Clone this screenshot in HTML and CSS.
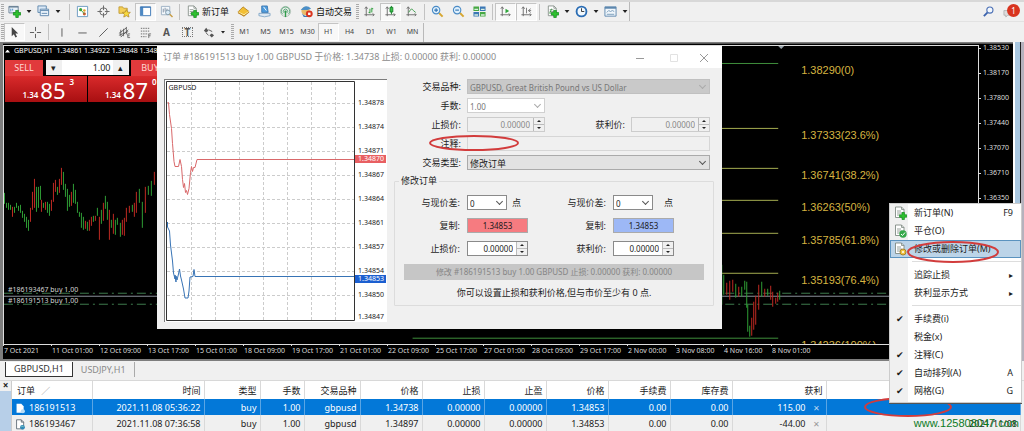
FILE: index.html
```html
<!DOCTYPE html>
<html lang="zh-CN">
<head>
<meta charset="utf-8">
<title>GBPUSD,H1</title>
<link rel="stylesheet" href="styles.css">
</head>
<body>
<svg class="defs" aria-hidden="true">
  <defs>
    <symbol id="plus" viewBox="0 0 8 8"><path d="M3 0.5h2.4v2.3h2.3v2.4H5.4v2.3H3V5.2H.6V2.8H3z" fill="#2fc12f" stroke="#0f8a1c" stroke-width=".7"/></symbol>
    <symbol id="sheet" viewBox="0 0 14 14"><path d="M2.5 1h6l2.500 2.500v8h-8.500z" fill="#fff" stroke="#7f8a83" stroke-width=".9"/><path d="M8.500 1v2.500H11M4 5h4M4 7h5M4 9h3" fill="none" stroke="#7f8a83" stroke-width=".8"/></symbol>
    <symbol id="axes" viewBox="0 0 14 14"><path d="M3.500 2v10M1.500 10.500H12M2 4l1.500-2L5 4M10.500 9l1.500 1.500-1.500 1.500" fill="none" stroke="#6c6c6c"/></symbol>
    <symbol id="deal" viewBox="0 0 14 14"><path d="M2 1h6l3 3v8.500H2z" fill="#fff" stroke="#4d5a66"/><path d="M8 1v3h3" fill="none" stroke="#4d5a66"/><circle cx="9.500" cy="10.500" r="3" fill="#2c86b8"/><path d="M8 10q1-1.500 3 0" stroke="#9be0c0" fill="none"/></symbol>
  </defs>
</svg>

<header class="toolbars">
  <div class="bar bar-main">
    <i class="grip"></i>
    <button class="tool" aria-label="新图表"><svg viewBox="0 0 14 14"><path d="M1 1.500h10v7H1z" fill="#e9f1f8" stroke="#6b8296"/><path d="M1 2h10" stroke="#6b8296" stroke-width="1.500"/><path d="M3 7V4M5 6V4" stroke="#4b8ec2"/><use href="#plus" x="5" y="5" width="9" height="9"/></svg></button><i class="drop"></i>
    <button class="tool" aria-label="配置文件"><svg viewBox="0 0 14 14"><path d="M1 1h9v7H1z" fill="#dbe9f6" stroke="#5e87ad"/><path d="M3.500 4.500h9v7h-9z" fill="#edf5fc" stroke="#5e87ad"/><path d="M3.500 6h9M5 9h6" stroke="#5e87ad"/></svg></button><i class="drop"></i>
    <i class="sep"></i>
    <button class="tool" aria-label="市场报价"><svg viewBox="0 0 14 14"><path d="M1.500 1.500h11v11h-11z" fill="#fff" stroke="#6a9ac0"/><circle cx="5" cy="5" r="1.700" fill="#3aa33a"/><circle cx="9" cy="6" r="1.400" fill="#e0a32e"/><circle cx="9" cy="9.500" r="1.700" fill="#d05a30"/><path d="M5 5l4 4.500" stroke="#3aa33a"/></svg></button>
    <button class="tool" aria-label="数据窗口"><svg viewBox="0 0 14 14"><circle cx="7" cy="7" r="4" fill="none" stroke="#666"/><path d="M7 .500v5M7 8.500v5M.500 7h5M8.500 7h5" stroke="#666"/></svg></button>
    <button class="tool" aria-label="导航"><svg viewBox="0 0 14 14"><path d="M1 2h4l1 1.500h4V9H1z" fill="#f4cf57" stroke="#b8902a" stroke-width=".8"/><path d="M9 5l1.300 2.700 3 .300-2.200 2 .700 3L9 11.500 6.200 13l.700-3-2.200-2 3-.300z" fill="#f7da3d" stroke="#b1872a" stroke-width=".8"/></svg></button>
    <button class="tool pressed" aria-label="终端"><svg viewBox="0 0 14 14"><path d="M1.500 2h11v9.500h-11z" fill="#fff" stroke="#3d78b5"/><path d="M2 2h2.500v9H2z" fill="#4b88c4"/><path d="M1.500 2.500h11" stroke="#3d78b5"/></svg></button>
    <button class="tool" aria-label="策略测试"><svg viewBox="0 0 14 14"><path d="M1.500 1.500h9v9h-9z" fill="#f5f9fc" stroke="#9db0c2"/><path d="M3.500 8V4M5.500 7V3M7.500 8V4" stroke="#7d8ea0"/><circle cx="8.500" cy="8" r="2.500" fill="#d9ebf7" stroke="#7d96a8"/><path d="M10.500 10l3 3" stroke="#c69b42" stroke-width="1.600"/></svg></button>
    <i class="sep"></i>
    <button class="tool wide"><svg viewBox="0 0 14 14"><use href="#sheet" width="14" height="14"/><use href="#plus" x="5" y="5" width="9" height="9"/></svg>新订单</button>
    <button class="tool" aria-label="编辑器"><svg viewBox="0 0 14 14"><path d="M1 7.500L6.500 2l6.500 5-5.500 5z" fill="#f2bf35" stroke="#a9781c" stroke-width=".8"/><path d="M1 7.500l6.500 3 5.500-3.500" fill="none" stroke="#fff0b0"/><path d="M1 7.500v1.500L7.500 12.500 13 8V7l-5.500 4.500z" fill="#bd8521"/></svg></button>
    <button class="tool" aria-label="市场"><svg viewBox="0 0 14 14"><path d="M4 1h6l1 7H4z" fill="#4f9cdd" stroke="#2b6aa8" stroke-width=".8"/><path d="M6 2l3 4" stroke="#fff"/><path d="M1 9h12v2.500q-6 2.500-12 0z" fill="#dfe9f2" stroke="#6d9ac0" stroke-width=".8"/></svg></button>
    <button class="tool" aria-label="信号"><svg viewBox="0 0 14 14"><circle cx="7" cy="7" r="5.500" fill="#e6ece8" stroke="#b3c2ba"/><path d="M4 10a4.500 4.500 0 1 1 6 0M5.500 8.500a2.300 2.300 0 1 1 3 0" fill="none" stroke="#5ba878"/><circle cx="7" cy="7" r="1.200" fill="#2f9a4a"/><path d="M7 7v6" stroke="#2f9a4a" stroke-width="1.500"/></svg></button>
    <button class="tool wide"><svg viewBox="0 0 14 14"><circle cx="6" cy="6.500" r="4.500" fill="#e8bc6a"/><path d="M.800 5.500Q6-2 12 4L8 5.500z" fill="#4b8fc8"/><path d="M2 9q4 5 8 1v3H4z" fill="#3b78b2"/><circle cx="10" cy="9.500" r="3.700" fill="#d9361f"/><path d="M8.700 8.200h2.600v2.600H8.700z" fill="#fff"/></svg>自动交易</button>
    <i class="grip"></i>
    <button class="tool" aria-label="柱状图"><svg viewBox="0 0 14 14"><use href="#axes"/><path d="M7.500 4v5M9.500 3v5M6 8h1.500M9.500 4H11" stroke="#279b35" fill="none"/></svg></button>
    <button class="tool pressed" aria-label="蜡烛图"><svg viewBox="0 0 14 14"><use href="#axes"/><path d="M8 1v9" stroke="#16822a"/><path d="M6.500 2.500h3v5h-3z" fill="#3cc04a" stroke="#16822a"/></svg></button>
    <button class="tool" aria-label="折线图"><svg viewBox="0 0 14 14"><use href="#axes"/><path d="M4 8q3-6 5-2l2.500 2" stroke="#3c9a4a" fill="none"/></svg></button>
    <i class="sep"></i>
    <button class="tool" aria-label="放大"><svg viewBox="0 0 14 14"><path d="M8.500 8.500l4 4" stroke="#d6a630" stroke-width="2.200"/><circle cx="5.500" cy="5.500" r="4" fill="#dff0fc" stroke="#4a8bc6" stroke-width="1.200"/><path d="M3.500 5.500h4M5.500 3.500v4" stroke="#2f73b4" stroke-width="1.200"/></svg></button>
    <button class="tool" aria-label="缩小"><svg viewBox="0 0 14 14"><path d="M8.500 8.500l4 4" stroke="#d6a630" stroke-width="2.200"/><circle cx="5.500" cy="5.500" r="4" fill="#dff0fc" stroke="#4a8bc6" stroke-width="1.200"/><path d="M3.500 5.500h4" stroke="#2f73b4" stroke-width="1.200"/></svg></button>
    <button class="tool" aria-label="平铺窗口"><svg viewBox="0 0 14 14"><path d="M.500 1.500h6v5h-6zM7.500 7.500h6v5h-6z" fill="#47a843"/><path d="M7.500 1.500h6v5h-6zM.500 7.500h6v5h-6z" fill="#3a77b5"/><path d="M1.500 4h4v1.500h-4zM8.500 4h4v1.500h-4zM1.500 10h4v1.500h-4zM8.500 10h4v1.500h-4z" fill="#d9efe0"/></svg></button>
    <i class="sep"></i>
    <button class="tool pressed" aria-label="自动滚动"><svg viewBox="0 0 14 14"><use href="#axes"/><path d="M7 4l4 2.500L7 9z" fill="#2ea53b"/></svg></button>
    <button class="tool pressed" aria-label="图表平移"><svg viewBox="0 0 14 14"><use href="#axes"/><path d="M7 3v6M11.500 4L9 6l2.500 2M9 6h3" fill="none" stroke="#777"/></svg></button>
    <i class="sep"></i>
    <button class="tool" aria-label="指标"><svg viewBox="0 0 14 14"><use href="#sheet" width="14" height="14"/><path d="M4 9l2-5" stroke="#2a9a35"/><use href="#plus" x="5" y="5" width="9" height="9"/></svg></button><i class="drop"></i>
    <button class="tool" aria-label="周期"><svg viewBox="0 0 14 14"><circle cx="7" cy="7" r="5.300" fill="#f2f8fd" stroke="#2b6db4" stroke-width="2"/><path d="M7 3.500V7h3" fill="none" stroke="#333"/></svg></button><i class="drop"></i>
    <button class="tool" aria-label="模板"><svg viewBox="0 0 14 14"><path d="M1 2h12v10H1z" fill="#f1f7fc" stroke="#5d87ae"/><path d="M1 3h12" stroke="#5d87ae" stroke-width="2"/><path d="M3 8l2-2 2 1 2-1 2 1M3 10h8" fill="none" stroke="#7699b8"/></svg></button><i class="drop"></i>
    <i class="edge"></i>
    <div class="bar-end">
      <button class="tool" aria-label="搜索"><svg viewBox="0 0 14 14"><path d="M6 8l-4 4" stroke="#3a62ad" stroke-width="2"/><circle cx="8.500" cy="5.500" r="3.300" fill="#f3f8fd" stroke="#4a6fb5" stroke-width="1.200"/></svg></button>
      <button class="tool alert" aria-label="消息"><svg viewBox="0 0 14 14"><path d="M1 6h7v5H5l-2 2v-2H1z" fill="#ddd" stroke="#aaa" stroke-width=".8"/></svg><span class="badge">1</span></button>
    </div>
  </div>
  <div class="bar bar-draw">
    <i class="grip"></i>
    <button class="tool pressed" aria-label="光标"><svg viewBox="0 0 14 14"><path d="M4 1v10l2.300-2.200L8 12.500l1.700-.800L8 8.200h3z" fill="#444"/></svg></button>
    <button class="tool" aria-label="十字准线"><svg viewBox="0 0 14 14"><path d="M7 1v4.500M7 8.500V13M1 7h4.500M8.500 7H13" stroke="#555"/></svg></button>
    <i class="sep"></i>
    <button class="tool" aria-label="垂直线"><svg viewBox="0 0 14 14"><path d="M7.500 2.500v9" stroke="#555"/></svg></button>
    <button class="tool" aria-label="水平线"><svg viewBox="0 0 14 14"><path d="M2.500 7.500h9" stroke="#555"/></svg></button>
    <button class="tool" aria-label="趋势线"><svg viewBox="0 0 14 14"><path d="M2.500 11.500l9-9" stroke="#555"/></svg></button>
    <button class="tool" aria-label="通道"><svg viewBox="0 0 14 14"><path d="M1 8l8-6M3 12l8-8M3 4v7M6 3v8M9 1v8M1 10l10-4" stroke="#555" stroke-width=".9"/><path d="M13 8.500h-2.500v4H13M10.500 10.500h2" fill="none" stroke="#555" stroke-width=".8"/></svg></button>
    <button class="tool" aria-label="斐波那契"><svg viewBox="0 0 14 14"><path d="M2 2.500h10M2 5.500h10M2 8.500h8M2 11.500h6" stroke="#666" stroke-dasharray="1.500 1"/><path d="M10.500 13V8.500H13M10.500 10.500h2" fill="none" stroke="#555" stroke-width=".8"/></svg></button>
    <button class="tool letter">A</button>
    <button class="tool letter boxed"><span>T</span></button>
    <button class="tool" aria-label="箭头"><svg viewBox="0 0 14 14"><path d="M2 5l2.500-3L7 5 4.500 7zM8 10l2.500-2L13 10l-2.500 2.500z" fill="#555"/><path d="M4 7l3 3M7 4l4 2" stroke="#555"/></svg></button><i class="drop"></i>
    <i class="grip"></i>
    <button class="tool">M1</button><button class="tool">M5</button><button class="tool">M15</button><button class="tool">M30</button><button class="tool pressed">H1</button><button class="tool">H4</button><button class="tool">D1</button><button class="tool">W1</button><button class="tool">MN</button>
    <i class="edge"></i>
  </div>
</header>

<main class="workspace">
  <section class="chart">
    <div class="plot">
      <svg class="candles" viewBox="5 46 975 300" preserveAspectRatio="xMinYMin slice">
        <path class="tri" d="M779 45h8l-4 4z"/>
        <path class="level-a" d="M722 63.500h58M414 338.500h366"/>
        <path class="level-b" d="M722 128.500h58M722 168.500h58M722 200.500h58M722 233.500h58M722 273.500h58"/>
        <path class="order" d="M5 293.500h975M5 304.500h975"/>
        <path class="bid" d="M5 296.500h975"/>
        <path class="up" d="M5.500 193V204M7.500 203V208M9.500 203V210M11.500 205V210M15.500 207V213M17.500 203V208M19.500 206V211M21.500 205V213M23.500 211V218M25.500 214V222M27.500 217V228M29.500 220V231M37.500 187V212M39.500 187V208M41.500 186V200M44.500 203V208M48.500 202V213M50.500 204V216M58.500 187V195M64.500 172V190M66.500 184V197M68.500 189V211M70.500 195V207M74.500 184V203M76.500 190V204M78.500 202V213M80.500 212V217M82.500 213V228M84.500 217V230M88.500 222V231M94.500 216V222M98.500 208V216M102.500 210V224M106.500 196V209M108.500 202V220M112.500 220V228M116.500 220V235M118.500 218V225M121.500 223V237M133.500 205V212M140.500 189V203M143.500 202V228M149.500 186V195M152.500 181V196M723.500 265V305M725.500 275V295M737.500 284V298M743.500 287V297M746.500 281V290M748.500 282V308M749.500 305V332M751.500 326V337M763.500 282V297M769.500 289V296M781.500 291V300"/>
        <path class="down" d="M13.500 207V217M31.500 208V222M33.500 192V210M35.500 179V208M42.500 200V212M46.500 202V210M52.500 200V211M54.500 183V202M56.500 180V192M60.500 179V193M62.500 168V185M72.500 192V206M86.500 221V229M90.500 220V231M92.500 217V226M96.500 216V221M100.500 217V240M104.500 203V221M110.500 210V240M114.500 214V234M123.500 220V235M125.500 218V236M127.500 208V222M130.500 206V213M135.500 203V217M137.500 192V213M146.500 187V213M155.500 172V185M728.500 283V295M731.500 281V300M734.500 280V292M740.500 287V297M753.500 318V336M755.500 302V330M757.500 296V325M760.500 285V310M766.500 289V297M772.500 286V300M774.500 292V307M777.500 298V304M779.500 293V302"/>
        <g class="fib">
          <text x="803" y="74">1.38290(0)</text>
          <text x="803" y="139">1.37333(23.6%)</text>
          <text x="803" y="179">1.36741(38.2%)</text>
          <text x="803" y="211">1.36263(50%)</text>
          <text x="803" y="244">1.35785(61.8%)</text>
          <text x="803" y="284">1.35193(76.4%)</text>
          <text x="803" y="349">1.34236(100%)</text>
        </g>
        <g class="note">
          <text x="9" y="292">#186193467 buy 1.00</text>
          <text x="9" y="303">#186191513 buy 1.00</text>
        </g>
      </svg>
      <div class="quick">
        <p class="symbol"><span class="tri-up"></span>GBPUSD,H1&nbsp; 1.34861 1.34922 1.34848 1.34853</p>
        <div class="trade">
          <button class="side">SELL</button>
          <div class="lots"><button aria-label="减少">▾</button><input value="1.00" aria-label="手数"><button aria-label="增加">▴</button></div>
          <button class="side">BUY</button>
        </div>
        <div class="quotes">
          <div class="quote">1.34<b>85</b><sup>3</sup></div>
          <div class="quote">1.34<b>87</b><sup>0</sup></div>
        </div>
      </div>
    </div>
    <div class="prices"><span>1.38530</span><span>1.38170</span><span>1.37800</span><span>1.37440</span><span>1.37070</span><span>1.36710</span><span>1.36350</span></div>
    <div class="times"><span>7 Oct 2021</span><span>11 Oct 01:00</span><span>12 Oct 09:00</span><span>13 Oct 17:00</span><span>15 Oct 01:00</span><span>18 Oct 09:00</span><span>19 Oct 17:00</span><span>21 Oct 01:00</span><span>22 Oct 09:00</span><span>25 Oct 17:00</span><span>27 Oct 01:00</span><span>28 Oct 09:00</span><span>29 Oct 17:00</span><span>2 Nov 00:00</span><span>3 Nov 08:00</span><span>4 Nov 16:00</span><span>8 Nov 01:00</span></div>
  </section>

  <section class="dialog" role="dialog" aria-labelledby="dlg-title">
    <header class="titlebar">
      <h1 id="dlg-title">订单 #186191513 buy 1.00 GBPUSD 于价格: 1.34738 止损: 0.00000 获利: 0.00000</h1>
      <button aria-label="最小化"><svg viewBox="0 0 10 10"><path d="M1 5.500h8" stroke="#999"/></svg></button>
      <button aria-label="最大化"><svg viewBox="0 0 10 10"><path d="M1.500 1.500h7v7h-7z" fill="none" stroke="#e2e2e2"/></svg></button>
      <button aria-label="关闭"><svg viewBox="0 0 10 10"><path d="M1 1l8 8M9 1l-8 8" stroke="#999"/></svg></button>
    </header>
    <div class="dialog-body">
      <div class="ticks">
        <svg class="tick-plot" viewBox="166 81 189 240" preserveAspectRatio="none">
          <path class="tick-grid" d="M191.500 82v238M215.500 82v238M239.500 82v238M263.500 82v238M287.500 82v238M311.500 82v238M335.500 82v238M167 103.500h187M167 127.500h187M167 151.500h187M167 175.500h187M167 199.500h187M167 223.500h187M167 247.500h187M167 271.500h187M167 295.500h187"/>
          <path class="ask" d="M167.500 102.500h1l1 12 2 14 1 15 1.500 18 1 5h3.500l1.500-7 1.500 7 1 13 1 8 1-4 1 9 1-2 1 4 1.500-6 1.500-16 1-6 1 5 1-4 1.500 0 2-8H354"/>
          <path class="buy" d="M167.500 222v5l2 4 1 14 2 16 1 12 1.500 6v-4l1 7v-6l1 4 1.500-6 1-5 1 7 1 4 2 9 1.500 9h3l1-7 1-14 3-.500 1-7 1 7H354"/>
          <path class="frame" d="M166.500 81.500h188v239h-188z"/>
          <text x="168.500" y="90">GBPUSD</text>
        </svg>
        <ul class="scale"><li>1.34878</li><li>1.34874</li><li>1.34871<em class="mark-ask">1.34870</em></li><li>1.34867</li><li>1.34864</li><li>1.34861</li><li>1.34857</li><li>1.34854<em class="mark-bid">1.34853</em></li><li>1.34850</li><li>1.34847</li></ul>
      </div>
      <form class="order-form">
        <div class="fields">
          <label for="sym">交易品种:</label>
          <span class="pick full off"><select id="sym" disabled><option>GBPUSD, Great British Pound vs US Dollar</option></select></span>
          <label for="vol">手数:</label>
          <span class="pick faint"><select id="vol" disabled><option>1.00</option></select></span>
          <label class="col1" for="sl0">止损价:</label>
          <span class="spin faded"><input id="sl0" value="0.00000" disabled><i></i></span>
          <label for="tp0">获利价:</label>
          <span class="spin faded"><input id="tp0" value="0.00000" disabled><i></i></span>
          <label for="cmt">注释:</label>
          <span class="full comment"><input id="cmt" disabled><svg class="ring" viewBox="0 0 92 18"><ellipse cx="46" cy="9" rx="44" ry="7"/></svg></span>
          <label for="kind">交易类型:</label>
          <span class="pick full type"><select id="kind"><option>修改订单</option></select></span>
        </div>
        <fieldset>
          <legend>修改订单</legend>
          <div class="modify">
            <label for="d1">与现价差:</label><div class="pair"><span class="pick"><select id="d1"><option>0</option></select></span>点</div>
            <label for="d2">与现价差:</label><div class="pair far"><span class="pick"><select id="d2"><option>0</option></select></span>点</div>
            <label for="c1">复制:</label><button type="button" id="c1" class="copy red">1.34853</button>
            <label for="c2">复制:</label><button type="button" id="c2" class="copy blue">1.34853</button>
            <label for="sl">止损价:</label><span class="spin"><input id="sl" value="0.00000"><i></i></span>
            <label for="tp">获利价:</label><span class="spin"><input id="tp" value="0.00000"><i></i></span>
          </div>
          <button type="button" class="submit" disabled>修改 #186191513 buy 1.00 GBPUSD 止损: 0.00000 获利: 0.00000</button>
          <p class="hint">你可以设置止损和获利价格,但与市价至少有 0 点.</p>
        </fieldset>
      </form>
    </div>
  </section>
</main>

<nav class="tabs"><button class="active">GBPUSD,H1</button><button>USDJPY,H1</button></nav>

<section class="terminal">
  <div class="rail"><button aria-label="关闭">×</button></div>
  <table>
    <colgroup><col class="w80"><col class="w112"><col class="w56"><col class="w44"><col class="w56"><col class="w62"><col class="w62"><col class="w62"><col class="w62"><col class="w62"><col class="w62"><col class="w94"><col></colgroup>
    <thead><tr><th>订单 <span class="sort">∕</span></th><th>时间</th><th>类型</th><th>手数</th><th>交易品种</th><th>价格</th><th>止损</th><th>止盈</th><th>价格</th><th>手续费</th><th>库存费</th><th>获利</th><th></th></tr></thead>
    <tbody>
      <tr class="selected"><td><svg class="doc" viewBox="0 0 14 14"><path d="M2 1h6l3 3v8.500H2z" fill="#fff"/><circle cx="10" cy="10.500" r="2.700" fill="#b9dcf5"/></svg>186191513</td><td>2021.11.08 05:36:22</td><td>buy</td><td>1.00</td><td>gbpusd</td><td>1.34738</td><td>0.00000</td><td>0.00000</td><td>1.34853</td><td>0.00</td><td>0.00</td><td>115.00<button class="x" aria-label="平仓">✕</button></td><td></td></tr>
      <tr><td><svg class="doc" viewBox="0 0 14 14"><use href="#deal"/></svg>186193467</td><td>2021.11.08 07:36:58</td><td>buy</td><td>1.00</td><td>gbpusd</td><td>1.34897</td><td>0.00000</td><td>0.00000</td><td>1.34853</td><td>0.00</td><td>0.00</td><td>-44.00<button class="x" aria-label="平仓">✕</button></td><td>2021/11/08</td></tr>
    </tbody>
  </table>
  <svg class="ring ring-row" viewBox="0 0 90 22"><ellipse cx="45" cy="11" rx="43" ry="9"/></svg>
  <a class="mark" href="#">www.125808047.com</a>
</section>

<div class="menu" role="menu">
  <button role="menuitem"><svg viewBox="0 0 14 14"><use href="#sheet"/><use href="#plus" x="6" y="6" width="8" height="8"/></svg>新订单(N)<kbd>F9</kbd></button>
  <button role="menuitem"><svg viewBox="0 0 14 14"><use href="#sheet"/><circle cx="10" cy="10" r="3.700" fill="#35a84a"/><path d="M8 10l1.500 1.500L12 8.500" fill="none" stroke="#fff"/></svg>平仓(O)</button>
  <button role="menuitem" class="hot"><svg viewBox="0 0 14 14"><use href="#sheet"/><circle cx="10" cy="10" r="3" fill="#f0c23e" stroke="#a9842d"/><circle cx="10" cy="10" r="1" fill="#fff"/></svg>修改或删除订单(M)</button>
  <hr>
  <button role="menuitem"><span class="tick"></span>追踪止损<kbd class="sub">▸</kbd></button>
  <button role="menuitem"><span class="tick"></span>获利显示方式<kbd class="sub">▸</kbd></button>
  <hr>
  <button role="menuitem"><span class="tick">✔</span>手续费(i)</button>
  <button role="menuitem"><span class="tick"></span>税金(x)</button>
  <button role="menuitem"><span class="tick">✔</span>注释(C)</button>
  <button role="menuitem"><span class="tick">✔</span>自动排列(A)<kbd>A</kbd></button>
  <button role="menuitem"><span class="tick">✔</span>网格(G)<kbd>G</kbd></button>
  <svg class="ring ring-menu" viewBox="0 0 94 24"><ellipse cx="47" cy="12" rx="45" ry="10"/></svg>
</div>
</body>
</html>
```
FILE: styles.css
```css
* { box-sizing: border-box; }
body {
  position: relative;
  display: flex;
  flex-direction: column;
  min-height: 100vh;
  margin: 0;
  overflow: hidden;
  background: #f0f0f0;
  color: #1c1c1c;
  font: 9px/12px "Noto Sans", "Noto Sans CJK SC", sans-serif;
}
button, input, select {
  margin: 0;
  padding: 0;
  border: 0;
  border-radius: 0;
  background: none;
  color: inherit;
  font: inherit;
}
p, h1, ul { margin: 0; padding: 0; font: inherit; list-style: none; }
.defs { position: absolute; width: 0; height: 0; }

/* toolbars */
.toolbars { border-top: 2px solid #d8d8d8; }
.bar { display: flex; align-items: center; height: 20px; padding-left: 1px; }
.grip { width: 3px; height: 16px; background: repeating-linear-gradient(#aaa 0 1px, #f0f0f0 1px 2px); }
.bar-main { border-bottom: 1px solid #e2e2e2; }
.tool {
  position: relative;
  display: flex;
  flex: none;
  align-items: center;
  justify-content: center;
  width: 21px;
  height: 18px;
  color: #444;
  font-size: 7px;
}
.tool svg { width: 13px; height: 13px; }
.tool.wide { width: auto; gap: 3px; padding: 0 4px; color: #111; font-size: 9px; white-space: nowrap; }
.pressed { border: 1px solid #c4c4c4; border-right-color: #fff; border-bottom-color: #fff; background: #f8f8f8; }
.drop { width: 8px; height: 3px; background: #222; clip-path: polygon(20% 0, 80% 0, 50% 100%); }
.sep { width: 1px; height: 16px; margin: 0 2px; background: #c2c2c2; }
.bar-main .drop + .sep { margin-left: 7px; }
.drop + .grip { margin-left: 4px; }
.bar .edge { width: 1px; height: 19px; background: #b9b9b9; }
.letter { color: #555; font-size: 10px; font-weight: bold; }
.boxed span { padding: 0 2px; border: 1px dotted #777; line-height: 8px; }
.bar-end { display: flex; margin-left: auto; padding-right: 4px; }
.badge {
  position: absolute;
  top: 1px;
  right: 0;
  width: 13px;
  height: 13px;
  border-radius: 50%;
  background: #d8341f;
  color: #fff;
  font-size: 8px;
  line-height: 13px;
  text-align: center;
}

/* chart */
.workspace { position: relative; flex: 1; display: flex; }
.chart {
  flex: 1;
  display: grid;
  grid-template: 1fr 14px / minmax(0, 1fr) 34px;
  padding-left: 1px;
  border: solid #7d7d7d;
  border-width: 1px 0 2px 3px;
  background: #000;
  box-shadow: inset 0 1px #555;
}
.workspace::after {
  content: "";
  width: 11px;
  background: linear-gradient(90deg, #fff 0 2px, #a9c7e0 2px 7px, #222 7px 8px, #b5b2bd 8px);
}
.plot { position: relative; margin-top: 2px; border: solid #ddd; border-width: 1px 1px 1px 0; box-shadow: -1px 0 #ddd; overflow: hidden; }
.candles { position: absolute; width: 100%; height: 100%; }
.candles path { fill: none; stroke-width: 1; }
.candles .tri { fill: #9aa5ad; }
.candles .level-a { stroke: #3f8f3c; }
.candles .level-b { stroke: #a5ad50; }
.candles .order { stroke: #3d7a4c; stroke-dasharray: 9 4 2 4; }
.candles .bid { stroke: #8a9099; }
.candles .up { stroke: #2f9e35; }
.candles .down { stroke: #c02a22; }
.fib { fill: #d6b440; font: 11px "Liberation Sans", sans-serif; }
.note { fill: #d5d5d5; font-size: 7px; }
.prices { display: flex; flex-direction: column; gap: 13px; color: #ddd; font-size: 7px; line-height: 12px; }
.prices span { display: flex; align-items: center; gap: 2px; }
.prices span::before { content: ""; width: 2px; height: 1px; background: #ddd; }
.prices { margin-top: -1px; }
.times { display: grid; grid-auto-flow: column; grid-auto-columns: 48px; justify-content: start; margin-left: -1px; color: #ddd; font-size: 7px; white-space: nowrap; }
.times span { border-left: 1px solid; border-image: linear-gradient(#ddd 2px, transparent 2px) 1; }

.quick { position: absolute; top: 0; left: 1px; width: 164px; color: #fff; }
.symbol { display: flex; align-items: center; gap: 4px; height: 14px; padding-bottom: 4px; font-size: 7px; white-space: nowrap; }
.tri-up { width: 5px; height: 3px; background: #fff; clip-path: polygon(50% 0, 100% 100%, 0 100%); }
.trade { display: flex; justify-content: space-between; height: 16px; }
.side { width: 38px; background: #e13a3c; color: #ffd9d5; }
.lots { display: flex; width: 83px; height: 15px; padding: 0; background: #fff; color: #222; }
.lots button { width: 16px; background: #f0f0f0; line-height: 14px; }
.lots input { flex: 1; min-width: 0; padding-right: 2px; text-align: right; font-size: 9px; }
.quotes { display: grid; grid-template-columns: 1fr 1fr; gap: 1px; }
.quote { display: flex; align-items: flex-end; justify-content: center; gap: 2px; height: 26px; padding: 0 0 2px 5px; background: linear-gradient(#d92a2b, #a80f11); font-size: 8px; font-weight: 600; line-height: 10px; }
.quote b { font-size: 22px; font-weight: 400; line-height: 20px; }
.quote sup { align-self: flex-start; margin-left: 2px; font-size: 8px; line-height: 12px; }

/* order window */
.dialog { position: absolute; top: 4px; left: 157px; width: 565px; background: #f0f0f0; }
.titlebar { display: flex; align-items: center; height: 22px; padding: 0 5px 0 6px; background: #fff; color: #8c8c8c; }
.titlebar h1 { flex: 1; white-space: nowrap; }
.titlebar button { width: 34px; height: 20px; }
.titlebar button:last-child { width: 26px; }
.titlebar svg { width: 10px; height: 10px; vertical-align: middle; }
.dialog-body { display: flex; gap: 7px; padding: 11px 8px 7px 7px; }
.ticks { display: flex; flex: none; height: 243px; width: 223px; padding: 1px 0 0 1px; border: solid #7c7c7c; border-width: 1px 0 0 1px; background: #fff; }
.tick-plot { width: 189px; height: 240px; }
.tick-plot path { fill: none; }
.tick-plot text { fill: #222; font-size: 7px; }
.tick-plot .tick-grid { stroke: #ccc; stroke-dasharray: 3 2; }
.ask { stroke: #d9686a; }
.buy { stroke: #3773b5; }
.frame { stroke: #333; }
.scale { flex: 1; display: flex; flex-direction: column; gap: 12px; padding: 16px 0 0; font-size: 7px; line-height: 12px; }
.scale li { position: relative; padding-left: 3px; }
.scale li:last-child { margin-top: -2px; }
.scale em { position: absolute; top: 10px; left: 0; width: 31px; padding-left: 3px; color: #fff; font-style: normal; line-height: 8px; }
.mark-ask { background: #e85f62; }
.mark-bid { background: #1c5fd0; }
.order-form { flex: 1; min-width: 0; }
.fields { display: grid; grid-template-columns: 67px 78px minmax(0, 1fr) 79px; column-gap: 6px; row-gap: 4px; padding-right: 4px; align-items: center; }
.fields > label, .modify > label { text-align: right; white-space: nowrap; }
.fields > * { min-height: 15px; line-height: 15px; }
.fields .full { grid-column: 2 / -1; }
.fields .col1 { grid-column: 1; }
.pick { position: relative; display: block; height: 15px; border: 1px solid #8a8a8a; background: #fff; }
.pick select { display: block; width: 100%; height: 13px; padding-left: 2px; appearance: none; font-size: 8px; opacity: 1; }
.pick::after { content: ""; position: absolute; top: 3px; right: 4px; width: 4px; height: 4px; border: solid #555; border-width: 0 1px 1px 0; transform: rotate(45deg); }
.pick.off { border-color: #c0c0c0; background: #c9c9c9; color: #777; }
.pick.faint { border-color: #d0d0d0; color: #777; }
.pick.off::after, .pick.faint::after { border-color: #aaa; }
.pick.type { border-color: #aaa; background: #e2e2e2; }
.pick.type select { font-size: 9px; }
.spin { display: flex; height: 15px; border: 1px solid #8a8a8a; background: #fff; font-size: 8px; }
.spin input { flex: 1; min-width: 0; padding-right: 3px; text-align: right; }
.spin i { position: relative; width: 11px; border-left: 1px solid #bbb; background: linear-gradient(#f0f0f0 6px, #bbb 6px 7px, #f0f0f0 7px); }
.spin i::before, .spin i::after { content: ""; position: absolute; left: 3px; width: 4px; height: 2px; background: #222; clip-path: polygon(50% 0, 100% 100%, 0 100%); }
.spin i::before { top: 2px; }
.spin i::after { bottom: 2px; transform: rotate(180deg); }
.spin.faded { border-color: #ccc; background: #f0f0f0; color: #888; }
.comment { position: relative; height: 15px; }
.comment input { display: block; width: 100%; height: 15px; border: 1px solid #d6d6d6; }
.ring { position: absolute; fill: none; stroke: #d23c3c; stroke-width: 2; pointer-events: none; }
.comment .ring { top: -2px; left: -39px; width: 92px; height: 18px; }
fieldset { margin: 5px 0 0; padding: 0 9px 6px; border: 1px solid #dcdcdc; border-radius: 1px; min-width: 0; }
legend { padding: 0 2px; margin-left: -5px; }
.modify { display: grid; grid-template-columns: 56px 61px 71px 1fr; column-gap: 7px; row-gap: 8px; padding-top: 8px; line-height: 15px; }
.pair { display: flex; gap: 5px; white-space: nowrap; }
.pair.far { gap: 11px; }
.pair .pick { flex: none; width: 40px; }
.modify .copy, .modify .spin { width: 61px; }
.copy { height: 15px; border: 1px solid #aaa; font-size: 8px; line-height: 13px; }
.red { background: #f67b80; }
.blue { background: #9db8f6; }
.submit { display: block; width: 100%; height: 16px; margin: 8px 0 7px; background: #c6c6c6; color: #858585; font-size: 8px; line-height: 16px; white-space: nowrap; }
.hint { text-align: center; }

/* tabs and terminal */
.tabs { display: flex; height: 20px; padding: 1px 0 0 5px; border-bottom: 1px solid #d8d8d8; }
.tabs button { height: 15px; padding: 0 8px; border-right: 1px solid #aaa; color: #8a8a8a; font-size: 9px; }
.tabs .active { border: solid #333; border-width: 0 1px 1px; background: #fff; color: #333; }
.terminal { position: relative; display: flex; }
.rail { flex: none; width: 12px; border-right: 1px solid #ccc; background: linear-gradient(#f0f0f0 10px, #b7cfe8 10px); }
.rail button { display: block; width: 11px; line-height: 8px; font-size: 10px; font-weight: bold; }
table { flex: 1; width: 100%; margin-right: 3px; border-collapse: collapse; table-layout: fixed; }
.w80 { width: 80px; } .w112 { width: 112px; } .w56 { width: 56px; } .w44 { width: 44px; } .w62 { width: 62px; } .w94 { width: 94px; }
th, td { height: 16px; padding: 0 3px; border-right: 1px solid #d9d9d9; font-weight: 400; text-align: right; white-space: nowrap; line-height: 15px; }
th { height: 18px; background: #fff; }
td { background: #f0f0f0; }
th:first-child, td:first-child { text-align: left; }
th:first-child { padding-left: 5px; }
.sort { margin-left: 4px; color: #999; }
.selected td { border-color: #5ba5e4; background: #0378d8; color: #fff; }
.doc { width: 11px; height: 11px; margin-right: 3px; vertical-align: middle; }
.x { width: 13px; margin-left: 4px; color: #999; font-size: 8px; }
.selected .x { color: #b9d7f0; }
.ring-row { top: 15px; right: 71px; width: 90px; height: 22px; }
.mark { position: absolute; right: 5px; bottom: 1px; color: #0b7a1e; font: 11px/14px "Liberation Sans", sans-serif; text-decoration: none; }

/* context menu */
.menu { position: absolute; top: 203px; right: 2px; width: 133px; padding: 1px 1px 3px; border-bottom: 1px solid #555; background: linear-gradient(90deg, #f0f0f0 19px, #fff 19px); box-shadow: inset 0 0 0 1px #ccc; }
.menu button { display: flex; align-items: center; gap: 7px; width: 100%; height: 18px; padding: 0 8px 0 3px; text-align: left; white-space: nowrap; }
.menu svg:not(.ring), .tick { flex: none; width: 14px; height: 14px; }
.tick { text-align: center; line-height: 14px; }
.menu kbd { margin-left: auto; font: inherit; }
.menu .sub { font-size: 8px; }
.menu .hot { border: 1px solid #5b93bf; background: #bcd4e8; padding-left: 2px; }
.menu hr { height: 1px; margin: 3px 0 4px 22px; border: 0; background: #ddd; }
.ring-menu { top: 37px; left: 17px; width: 94px; height: 24px; }
```
